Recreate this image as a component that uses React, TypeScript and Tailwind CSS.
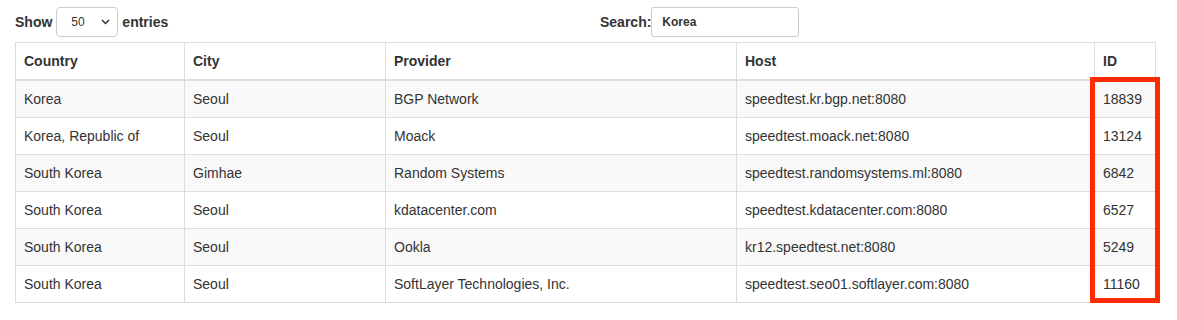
import React from 'react';

const rows = [
    { country: 'Korea', city: 'Seoul', provider: 'BGP Network', host: 'speedtest.kr.bgp.net:8080', id: '18839' },
    { country: 'Korea, Republic of', city: 'Seoul', provider: 'Moack', host: 'speedtest.moack.net:8080', id: '13124' },
    { country: 'South Korea', city: 'Gimhae', provider: 'Random Systems', host: 'speedtest.randomsystems.ml:8080', id: '6842' },
    { country: 'South Korea', city: 'Seoul', provider: 'kdatacenter.com', host: 'speedtest.kdatacenter.com:8080', id: '6527' },
    { country: 'South Korea', city: 'Seoul', provider: 'Ookla', host: 'kr12.speedtest.net:8080', id: '5249' },
    { country: 'South Korea', city: 'Seoul', provider: 'SoftLayer Technologies, Inc.', host: 'speedtest.seo01.softlayer.com:8080', id: '11160' },
];

const headers = ['Country', 'City', 'Provider', 'Host', 'ID'];

export default function App() {
    return (
        <div className="w-[1170px] bg-white text-[#333] text-[14px] leading-[20px]" style={{ fontFamily: '"Liberation Sans", Arial, sans-serif' }}>
            {/* Length + filter */}
            <div className="grid grid-cols-2 pt-[7px]">
                <div className="px-[15px] flex items-center gap-[4px] font-bold">
                    <span>Show</span>
                    <div className="relative w-[62px] h-[30px] border border-[#ccc] rounded-[4px] bg-white flex items-center pl-[14px] text-[12px] font-normal">
                        <span>50</span>
                        <svg className="absolute right-[7px] top-[11px]" width="9" height="6" viewBox="0 0 9 6" fill="none">
                            <path d="M1 1l3.5 3.5L8 1" stroke="#333" strokeWidth="1.5" />
                        </svg>
                    </div>
                    <span>entries</span>
                </div>
                <div className="px-[15px] flex items-center font-bold">
                    <span>Search:</span>
                    <div className="w-[148px] h-[30px] border border-[#ccc] rounded-[3px] bg-white flex items-center pl-[10px] text-[12px]">
                        Korea
                    </div>
                </div>
            </div>

            {/* Table */}
            <div className="relative mx-[15px] mt-[5px] w-[1140px]">
                <table className="w-[1140px] border-collapse border border-[#ddd] table-fixed">
                    <colgroup>
                        <col className="w-[169px]" />
                        <col className="w-[201px]" />
                        <col className="w-[351px]" />
                        <col className="w-[358px]" />
                        <col className="w-[61px]" />
                    </colgroup>
                    <thead>
                        <tr>
                            {headers.map((h) => (
                                <th key={h} className="text-left font-bold px-[8px] py-[8px] border border-[#ddd] border-b-2">
                                    {h}
                                </th>
                            ))}
                        </tr>
                    </thead>
                    <tbody>
                        {rows.map((r, i) => (
                            <tr key={r.id} className={i % 2 === 0 ? 'bg-[#f9f9f9]' : 'bg-white'}>
                                <td className="px-[8px] py-[8px] border border-[#ddd]">{r.country}</td>
                                <td className="px-[8px] py-[8px] border border-[#ddd]">{r.city}</td>
                                <td className="px-[8px] py-[8px] border border-[#ddd]">{r.provider}</td>
                                <td className="px-[8px] py-[8px] border border-[#ddd]">{r.host}</td>
                                <td className="px-[8px] py-[8px] border border-[#ddd]">{r.id}</td>
                            </tr>
                        ))}
                    </tbody>
                </table>
                {/* highlight annotation */}
                <div className="absolute left-[1075px] top-[35px] w-[70px] h-[226px] border-[5px] border-[#ff2a00] pointer-events-none" />
            </div>
        </div>
    );
}
